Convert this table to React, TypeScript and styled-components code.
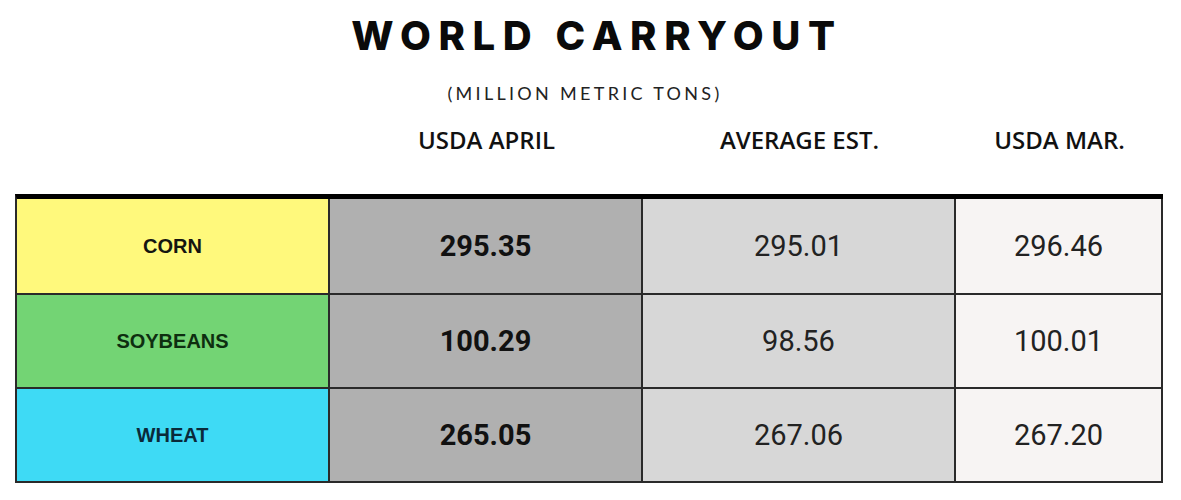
import React from "react";
import styled, { createGlobalStyle } from "styled-components";

const GlobalStyle = createGlobalStyle`
  html, body {
    margin: 0;
    padding: 0;
    background: #ffffff;
  }
`;

const Page = styled.main`
  width: 1181px;
  height: 500px;
  overflow: hidden;
  padding: 0 0 0 15px;
  box-sizing: border-box;
`;

const Title = styled.h1`
  margin: 0;
  padding-top: 12px;
  padding-right: 2px;
  text-align: center;
  font-family: Inter, "Liberation Sans", sans-serif;
  font-weight: 800;
  font-size: 40px;
  line-height: 48px;
  letter-spacing: 7.6px;
  color: #0a0a0a;
`;

const Subtitle = styled.div`
  margin-top: 22px;
  text-align: center;
  padding-right: 26px;
  font-family: Lato, "Liberation Sans", sans-serif;
  font-weight: 400;
  font-size: 18px;
  line-height: 22px;
  letter-spacing: 3.3px;
  color: #222;
`;

const columns = "313px 313px 313px 207px";

const HeaderRow = styled.div`
  display: grid;
  grid-template-columns: ${columns};
  margin-top: 20px;
  padding-left: 2px;
  height: 70px;
`;

const HeaderCell = styled.div`
  text-align: center;
  font-family: "Open Sans", "Liberation Sans", sans-serif;
  font-weight: 600;
  font-size: 24px;
  line-height: 32px;
  color: #111;
`;

const Table = styled.div`
  width: 1148px;
  box-sizing: border-box;
  border-top: 5px solid #000;
  border-left: 2px solid #2a2a2a;
  display: grid;
  grid-template-columns: ${columns};
`;

const Cell = styled.div<{ $bg: string; $h: number }>`
  height: ${(p) => p.$h}px;
  background: ${(p) => p.$bg};
  border-right: 2px solid #2a2a2a;
  border-bottom: 2px solid #2a2a2a;
  display: flex;
  align-items: center;
  justify-content: center;
`;

const Label = styled.span<{ $color: string }>`
  font-family: "Liberation Sans", Arial, sans-serif;
  font-weight: 700;
  font-size: 20px;
  color: ${(p) => p.$color};
`;

const Value = styled.span<{ $bold?: boolean }>`
  font-family: Roboto, "Liberation Sans", sans-serif;
  font-weight: ${(p) => (p.$bold ? 700 : 400)};
  font-size: 29px;
  color: ${(p) => (p.$bold ? "#111" : "#222")};
`;

const rows = [
  { name: "CORN", bg: "#fff97c", color: "#151510", values: ["295.35", "295.01", "296.46"], h: 94 },
  { name: "SOYBEANS", bg: "#73d474", color: "#0e2e10", values: ["100.29", "98.56", "100.01"], h: 92 },
  { name: "WHEAT", bg: "#3edaf5", color: "#0a2a3a", values: ["265.05", "267.06", "267.20"], h: 92 },
];

const valueBgs = ["#b0b0b0", "#d7d7d7", "#f7f4f3"];

const App = () => {
  return (
    <Page>
      <GlobalStyle />
      <Title>WORLD CARRYOUT</Title>
      <Subtitle>(MILLION METRIC TONS)</Subtitle>
      <HeaderRow>
        <HeaderCell />
        <HeaderCell>USDA APRIL</HeaderCell>
        <HeaderCell>AVERAGE EST.</HeaderCell>
        <HeaderCell>USDA MAR.</HeaderCell>
      </HeaderRow>
      <Table>
        {rows.map((row) => (
          <React.Fragment key={row.name}>
            <Cell $bg={row.bg} $h={row.h}>
              <Label $color={row.color}>{row.name}</Label>
            </Cell>
            {row.values.map((v, i) => (
              <Cell key={i} $bg={valueBgs[i]} $h={row.h}>
                <Value $bold={i === 0}>{v}</Value>
              </Cell>
            ))}
          </React.Fragment>
        ))}
      </Table>
    </Page>
  );
};

export default App;
